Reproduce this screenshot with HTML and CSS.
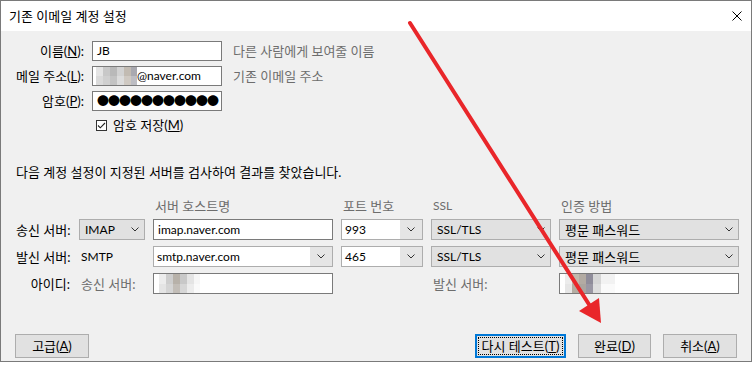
FILE: index.html
```html
<!DOCTYPE html>
<html lang="ko">
<head>
<meta charset="utf-8">
<title>기존 이메일 계정 설정</title>
<link rel="stylesheet" href="styles.css">
</head>
<body>
<div class="window">
  <div class="titlebar">
    <span class="title">기존 이메일 계정 설정</span>
    <svg class="close" viewBox="0 0 10 10" width="10" height="10"><path d="M0.5 0.5 L9.5 9.5 M9.5 0.5 L0.5 9.5" stroke="#000" stroke-width="1" fill="none"/></svg>
  </div>
  <div class="content">
    <div class="identity">
      <span class="lbl">이름(<u>N</u>):</span>
      <div class="field en">JB</div>
      <span class="hint">다른 사람에게 보여줄 이름</span>

      <span class="lbl">메일 주소(<u>L</u>):</span>
      <div class="field en"><span class="mosaic m-email"></span>@naver.com</div>
      <span class="hint">기존 이메일 주소</span>

      <span class="lbl">암호(<u>P</u>):</span>
      <div class="field dots">●●●●●●●●●●●</div>
      <span></span>

      <span></span>
      <label class="check"><span class="box"><svg viewBox="0 0 11 11" width="11" height="11"><path d="M2 5.5 L4.3 7.8 L9 3" stroke="#222" stroke-width="1.1" fill="none"/></svg></span><span>암호 저장(<u>M</u>)</span></label>
    </div>

    <p class="msg">다음 계정 설정이 지정된 서버를 검사하여 결과를 찾았습니다.</p>

    <div class="servers">
      <span></span><span></span>
      <span class="head">서버 호스트명</span>
      <span class="head">포트 번호</span>
      <span class="head en">SSL</span>
      <span class="head">인증 방법</span>

      <span class="slbl">송신 서버:</span>
      <div class="select en"><span>IMAP</span><svg class="chev" viewBox="0 0 8 5" width="8" height="5"><path d="M0.5 0.5 L4 4 L7.5 0.5" stroke="#333" fill="none"/></svg></div>
      <div class="input en">imap.naver.com</div>
      <div class="combo en"><span class="ctext">993</span><span class="cbtn"><svg class="chev" viewBox="0 0 8 5" width="8" height="5"><path d="M0.5 0.5 L4 4 L7.5 0.5" stroke="#333" fill="none"/></svg></span></div>
      <div class="select en"><span>SSL/TLS</span><svg class="chev" viewBox="0 0 8 5" width="8" height="5"><path d="M0.5 0.5 L4 4 L7.5 0.5" stroke="#333" fill="none"/></svg></div>
      <div class="select"><span>평문 패스워드</span><svg class="chev" viewBox="0 0 8 5" width="8" height="5"><path d="M0.5 0.5 L4 4 L7.5 0.5" stroke="#333" fill="none"/></svg></div>

      <span class="slbl">발신 서버:</span>
      <span class="plain en">SMTP</span>
      <div class="combo en"><span class="ctext">smtp.naver.com</span><span class="cbtn"><svg class="chev" viewBox="0 0 8 5" width="8" height="5"><path d="M0.5 0.5 L4 4 L7.5 0.5" stroke="#333" fill="none"/></svg></span></div>
      <div class="combo en"><span class="ctext">465</span><span class="cbtn"><svg class="chev" viewBox="0 0 8 5" width="8" height="5"><path d="M0.5 0.5 L4 4 L7.5 0.5" stroke="#333" fill="none"/></svg></span></div>
      <div class="select en"><span>SSL/TLS</span><svg class="chev" viewBox="0 0 8 5" width="8" height="5"><path d="M0.5 0.5 L4 4 L7.5 0.5" stroke="#333" fill="none"/></svg></div>
      <div class="select"><span>평문 패스워드</span><svg class="chev" viewBox="0 0 8 5" width="8" height="5"><path d="M0.5 0.5 L4 4 L7.5 0.5" stroke="#333" fill="none"/></svg></div>

      <span class="slbl">아이디:</span>
      <span class="plain grey">송신 서버:</span>
      <div class="input"><span class="mosaic m-id"></span></div>
      <span></span>
      <span class="plain grey">발신 서버:</span>
      <div class="input"><span class="mosaic m-id2"></span></div>
    </div>

    <div class="buttons">
      <button class="btn">고급(<u>A</u>)</button>
      <div class="right">
        <button class="btn focus">다시 테스트(<u>T</u>)</button>
        <button class="btn">완료(<u>D</u>)</button>
        <button class="btn">취소(<u>A</u>)</button>
      </div>
    </div>
  </div>
</div>
<svg class="arrow" viewBox="0 0 752 371" width="752" height="371">
  <line x1="410" y1="23" x2="590" y2="306" stroke="#e9262a" stroke-width="4" stroke-linecap="round"/>
  <polygon points="601,323 579,311 599,298" fill="#e9262a"/>
</svg>
</body>
</html>
```

FILE: styles.css
```css
* { box-sizing: border-box; }
html, body { margin: 0; padding: 0; }
body {
  width: 752px;
  height: 371px;
  position: relative;
  overflow: hidden;
  background: #ffffff;
  font-family: Lato, "Noto Sans CJK KR", sans-serif;
  font-size: 13px;
  line-height: 16px;
  color: #000;
}
.en { font-size: 12px; }
u { text-decoration: underline; text-underline-offset: 1px; }

.window {
  width: 752px;
  height: 362px;
  border: 1px solid #7a7a7a;
  background: #f0f0f0;
  display: flex;
  flex-direction: column;
}
.titlebar {
  height: 30px;
  flex: none;
  background: #fff;
  display: flex;
  align-items: center;
  justify-content: space-between;
  padding: 0 9px 0 8px;
}
.close { display: block; }

.content {
  flex: 1;
  display: flex;
  flex-direction: column;
  padding-top: 10px;
}

.identity {
  display: grid;
  grid-template-columns: 83px 130px auto;
  grid-auto-rows: 20px;
  column-gap: 8px;
  row-gap: 5px;
  align-items: center;
}
.lbl { text-align: right; white-space: nowrap; }
.field {
  height: 20px;
  border: 1px solid #7a7a7a;
  background: #fff;
  padding: 0 4px;
  display: flex;
  align-items: center;
  white-space: nowrap;
  overflow: hidden;
}
.dots { letter-spacing: -1px; font-size: 12px; font-family: "Noto Sans CJK KR", sans-serif; }
.hint { color: #6d6d6d; margin-left: 3px; white-space: nowrap; }
.check {
  grid-column: 2 / span 2;
  display: flex;
  align-items: center;
  gap: 6px;
  margin-left: 4px;
  height: 18px;
  align-self: start;
  white-space: nowrap;
}
.box {
  width: 11px;
  height: 11px;
  border: 1px solid #333;
  background: #fff;
  display: flex;
  align-items: center;
  justify-content: center;
}
.box svg { display: block; margin: -1px; }

.mosaic { display: inline-block; flex: none; }
.m-email {
  width: 41px;
  height: 20px;
  margin-left: -1px;
  background:
    linear-gradient(90deg, #e4e4e4 0 7px, #c8c8c8 7px 14px, #b9b9b9 14px 21px, #d2d2d2 21px 28px, #c2bbb2 28px 35px, #a9a9b0 35px 41px) top / 41px 10px no-repeat,
    linear-gradient(90deg, #dadada 0 7px, #cfcfcf 7px 14px, #c3c3c3 14px 21px, #dcdcdc 21px 28px, #cfc9c2 28px 35px, #bdbdc3 35px 41px) bottom / 41px 10px no-repeat;
}
.m-id {
  width: 41px;
  height: 19px;
  margin-left: 1px;
  background:
    linear-gradient(90deg, #ececec 0 7px, #cdcdcd 7px 14px, #b7b1a9 14px 21px, #c8c8c8 21px 28px, #e4e4e4 28px 35px, #f6f6f6 35px 41px) top / 41px 10px no-repeat,
    linear-gradient(90deg, #e4e4e4 0 7px, #d4d4d4 7px 14px, #c2bdb7 14px 21px, #d6d6d6 21px 28px, #ececec 28px 35px, #fafafa 35px 41px) bottom / 41px 9px no-repeat;
}
.m-id2 {
  width: 50px;
  height: 19px;
  margin-left: 1px;
  background:
    linear-gradient(90deg, #ececec 0 7px, #c0b9ad 7px 14px, #b3aba3 14px 21px, #8f8c9a 21px 28px, #d6d6d6 28px 36px, #f2f2f2 36px 50px) top / 50px 10px no-repeat,
    linear-gradient(90deg, #e6e6e6 0 7px, #b5ada2 7px 14px, #aba59f 14px 21px, #9a97a4 21px 28px, #dedede 28px 36px, #fafafa 36px 50px) bottom / 50px 9px no-repeat;
}

.msg {
  margin: 28px 0 0;
  padding-left: 15px;
  white-space: nowrap;
}

.servers {
  margin-top: 19px;
  padding-left: 15px;
  display: grid;
  grid-template-columns: 55px 66px 180px 82px 120px 180px;
  grid-template-rows: 14px 21px 21px 21px;
  column-gap: 8px;
  row-gap: 6px;
  align-items: center;
}
.head { color: #6d6d6d; padding-left: 2px; line-height: 14px; white-space: nowrap; }
.slbl { text-align: right; padding-right: 1px; white-space: nowrap; }
.plain { padding-left: 2px; white-space: nowrap; }
.grey { color: #6d6d6d; }

.input {
  height: 21px;
  border: 1px solid #7a7a7a;
  background: #fff;
  padding: 0 4px;
  display: flex;
  align-items: center;
  white-space: nowrap;
  overflow: hidden;
}
.select {
  height: 21px;
  border: 1px solid #adadad;
  background: #e1e1e1;
  padding: 0 5px 0 5px;
  display: flex;
  align-items: center;
  justify-content: space-between;
  white-space: nowrap;
}
.chev { display: block; flex: none; }
.combo {
  height: 21px;
  border: 1px solid #adadad;
  background: #fff;
  display: flex;
  align-items: stretch;
}
.ctext {
  flex: 1;
  padding-left: 3px;
  display: flex;
  align-items: center;
  white-space: nowrap;
}
.cbtn {
  width: 22px;
  flex: none;
  background: #e5e5e5;
  display: flex;
  align-items: center;
  justify-content: center;
}

.buttons {
  margin-top: auto;
  padding: 0 14px 3px 14px;
  display: flex;
  justify-content: space-between;
}
.right { display: flex; gap: 12px; }
.btn {
  height: 24px;
  width: 74px;
  border: 1px solid #adadad;
  background: #e1e1e1;
  font-family: inherit;
  font-size: 13px;
  color: #000;
  padding: 0;
  line-height: 16px;
}
.btn.focus {
  width: 91px;
  border: 2px solid #0078d7;
  outline: 1px dotted #000;
  outline-offset: -4px;
}
.right .btn:nth-child(2) { width: 73px; }

.arrow {
  position: absolute;
  left: 0;
  top: 0;
  pointer-events: none;
}
```
